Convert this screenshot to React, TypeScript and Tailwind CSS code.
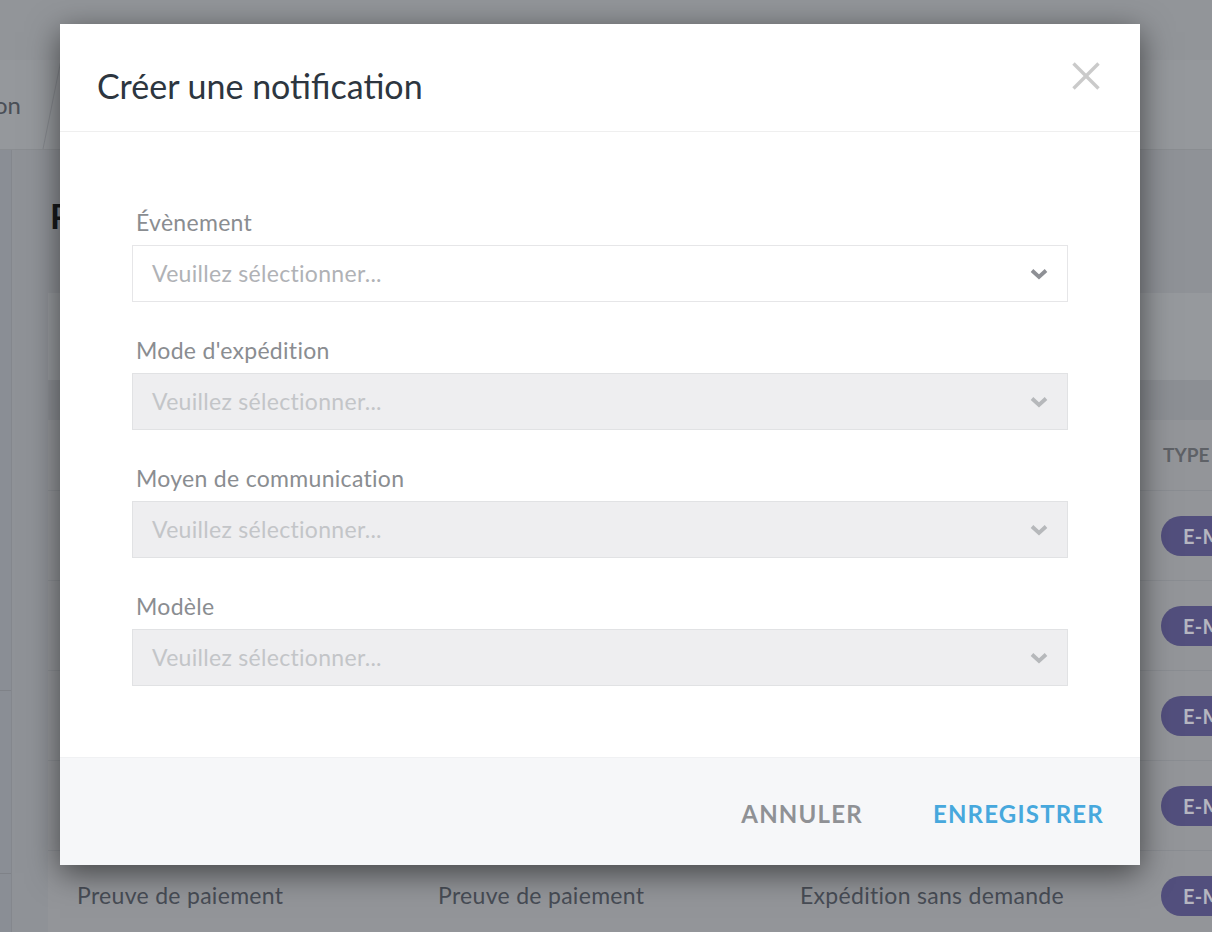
import React from "react";

const font = "font-['Lato','Noto_Sans',sans-serif]";

function Chevron({ color }: { color: string }) {
  return (
    <svg width="18" height="12" viewBox="0 0 18 12" fill="none">
      <polyline points="2,2.5 9,9 16,2.5" stroke={color} strokeWidth="3.8" strokeLinecap="butt" strokeLinejoin="miter" />
    </svg>
  );
}

function Field({ label, disabled }: { label: string; disabled?: boolean }) {
  return (
    <div className="flex flex-col">
      <div className="h-[28px] pl-[4px] text-[23px] tracking-[0.3px] leading-[28px] text-[#8a8d91] mb-[9px]">{label}</div>
      <div
        className={
          disabled
            ? "h-[57px] border border-[#e1e2e4] bg-[#eeeef0] flex items-center justify-between pl-[19px] pr-[19px]"
            : "h-[57px] border border-[#e6e6e8] bg-white flex items-center justify-between pl-[19px] pr-[19px]"
        }
      >
        <span className={disabled ? "text-[23px] tracking-[0.3px] text-[#c3c5c8]" : "text-[23px] tracking-[0.3px] text-[#b0b2b6]"}>
          Veuillez sélectionner...
        </span>
        <Chevron color={disabled ? "#b6b8bb" : "#8e9095"} />
      </div>
    </div>
  );
}

function Row({ a, b, c }: { a: string; b: string; c: string }) {
  return (
    <div className="h-[90px] shrink-0 border-t border-[#8a8d92] flex items-center text-[23px] tracking-[0.3px] text-[#474c55] whitespace-nowrap">
      <div className="w-[390px] shrink-0 pl-[29px]">{a}</div>
      <div className="w-[362px] shrink-0">{b}</div>
      <div className="w-[361px] shrink-0">{c}</div>
      <div className="flex-1">
        <span className="inline-flex items-center h-[40px] rounded-full bg-[#524f7d] pl-[22px] pr-[22px] text-[20px] font-bold text-[#b5b6c0] whitespace-nowrap">
          E-MAIL
        </span>
      </div>
    </div>
  );
}

export default function App() {
  return (
    <div className={`relative w-[1212px] h-[932px] overflow-hidden bg-[#909398] ${font}`}>
      {/* background page (already dimmed) */}
      <div className="flex flex-col h-full">
        <div className="h-[60px] bg-[#929599] shrink-0" />
        <div className="h-[90px] bg-[#95989c] border-b border-[#8a8d91] shrink-0 flex items-center relative overflow-hidden">
          <span className="ml-[-6px] text-[24px] text-[#4a4f57] whitespace-nowrap">on</span>
          <svg className="absolute left-[40px] top-0" width="24" height="90" viewBox="0 0 24 90">
            <line x1="3" y1="89" x2="21" y2="0" stroke="#85888d" strokeWidth="1" />
          </svg>
        </div>
        <div className="flex flex-1 min-h-0">
          <div className="w-[12px] shrink-0 bg-[#8a8e95] border-r border-[#84878d] flex flex-col">
            <div className="h-[541px] shrink-0 border-b border-[#7f8288]" />
            <div className="h-[183px] shrink-0 border-b border-[#7f8288]" />
          </div>
          <div className="w-[36px] shrink-0 bg-[#8f9297]" />
          <div className="flex-1 min-w-0 flex flex-col bg-[#8f9297]">
            <div className="h-[143px] shrink-0 flex items-center">
              <span className="ml-[2px] text-[34px] font-bold text-[#17191c] mt-[-13px]">Paramètres</span>
            </div>
            <div className="h-[87px] shrink-0 bg-[#96999d]" />
            <div className="h-[40px] shrink-0 bg-[#8c8f94]" />
            <div className="flex-1 flex flex-col bg-[#939599]">
              <div className="h-[70px] shrink-0 flex items-center pl-[1115px]">
                <span className="text-[19px] font-bold text-[#5e6166]">TYPE</span>
              </div>
              <Row a="Preuve de paiement" b="Preuve de paiement" c="Expédition sans demande" />
              <Row a="Preuve de paiement" b="Preuve de paiement" c="Expédition sans demande" />
              <Row a="Preuve de paiement" b="Preuve de paiement" c="Expédition sans demande" />
              <Row a="Preuve de paiement" b="Preuve de paiement" c="Expédition sans demande" />
              <Row a="Preuve de paiement" b="Preuve de paiement" c="Expédition sans demande" />
            </div>
          </div>
        </div>
      </div>

      {/* modal */}
      <div className="absolute left-[60px] top-[24px] w-[1080px] h-[841px] bg-white flex flex-col shadow-[0_8px_30px_rgba(0,0,0,0.55)]">
        <div className="h-[108px] shrink-0 border-b border-[#efefef] relative pl-[37px] pt-[40px]">
          <h2 className="text-[34px] leading-[44px] text-[#2d3640]">Créer une notification</h2>
          <button className="absolute right-[40px] top-[38px] w-[28px] h-[28px]">
            <svg width="28" height="28" viewBox="0 0 28 28">
              <line x1="1.5" y1="1.5" x2="26.5" y2="26.5" stroke="#cacaca" strokeWidth="3.4" />
              <line x1="26.5" y1="1.5" x2="1.5" y2="26.5" stroke="#cacaca" strokeWidth="3.4" />
            </svg>
          </button>
        </div>
        <div className="flex-1 px-[72px] pt-[76px] flex flex-col gap-[34px]">
          <Field label="Évènement" />
          <Field label="Mode d'expédition" disabled />
          <Field label="Moyen de communication" disabled />
          <Field label="Modèle" disabled />
        </div>
        <div className="h-[108px] shrink-0 bg-[#f6f7f9] border-t border-[#f0f1f3] flex items-center justify-end pr-[16px] gap-[30px]">
          <button className="px-[20px] pt-[4px] text-[24px] font-bold tracking-[1.2px] text-[#8f9195]">ANNULER</button>
          <button className="px-[20px] pt-[4px] text-[24px] font-bold tracking-[1.2px] text-[#47a8dd]">ENREGISTRER</button>
        </div>
      </div>
    </div>
  );
}
